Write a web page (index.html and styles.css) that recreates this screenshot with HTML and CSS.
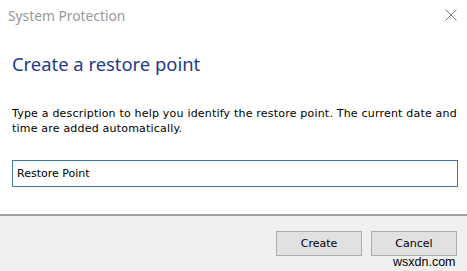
FILE: index.html
```html
<!DOCTYPE html>
<html lang="en">
  <head>
    <meta charset="UTF-8" />
    <meta name="viewport" content="width=device-width, initial-scale=1.0" />
    <title>System Protection</title>
    <link rel="stylesheet" href="styles.css">
  </head>
  <body>
    <div class="window">
      <div class="titlebar">
        <span class="title">System Protection</span>
        <svg class="close" width="12" height="12" viewBox="0 0 12 12">
          <path d="M0.5 0.5 L11.5 11.5 M11.5 0.5 L0.5 11.5" stroke="#7a7a7a" stroke-width="1" fill="none" />
        </svg>
      </div>
      <div class="content">
        <h1 class="instruction">Create a restore point</h1>
        <p class="desc">Type a description to help you identify the restore point. The current date and<br>time are added automatically.</p>
        <input class="name" type="text" value="Restore Point" />
      </div>
      <div class="footer">
        <button class="btn">Create</button>
        <button class="btn">Cancel</button>
      </div>
      <span class="watermark">wsxdn.com</span>
    </div>
  </body>
</html>
```

FILE: styles.css
```css
* {
  margin: 0;
  padding: 0;
  box-sizing: border-box;
}
body {
  background: #fff;
}
.window {
  position: relative;
  width: 467px;
  height: 271px;
  display: flex;
  flex-direction: column;
  background: #fff;
  font-family: "DejaVu Sans", Verdana, sans-serif;
}
.titlebar {
  height: 30px;
  display: flex;
  align-items: center;
  justify-content: space-between;
  padding: 0 10px 0 8px;
}
.title {
  font-family: "Noto Sans", sans-serif;
  font-size: 13.8px;
  color: #999;
}
.content {
  flex: 1;
  padding: 22px 9px 0 12px;
}
.instruction {
  font-family: "Noto Sans", sans-serif;
  font-weight: normal;
  font-size: 18.4px;
  line-height: 24px;
  color: #1f3a8a;
}
.desc {
  margin-top: 30px;
  font-size: 11px;
  line-height: 15px;
  letter-spacing: 0.2px;
  color: #000;
  white-space: nowrap;
}
.name {
  display: block;
  margin-top: 24px;
  width: 446px;
  height: 27px;
  border: 1px solid #3b78a9;
  padding: 0 4px;
  font-family: "DejaVu Sans", Verdana, sans-serif;
  font-size: 11px;
  color: #000;
  outline: none;
}
.footer {
  height: 57px;
  display: flex;
  justify-content: flex-end;
  align-items: flex-start;
  gap: 9px;
  padding: 15px 10px 0 0;
  background: #f0f0f0;
  border-top: 2px solid #a0a0a0;
}
.btn {
  width: 86px;
  height: 25px;
  background: #e1e1e1;
  border: 1px solid #adadad;
  font-family: "DejaVu Sans", Verdana, sans-serif;
  font-size: 11px;
  color: #000;
}
.watermark {
  position: absolute;
  left: 393px;
  top: 255px;
  font-family: "Liberation Sans", Arial, sans-serif;
  font-size: 12.5px;
  color: #000;
}
```
